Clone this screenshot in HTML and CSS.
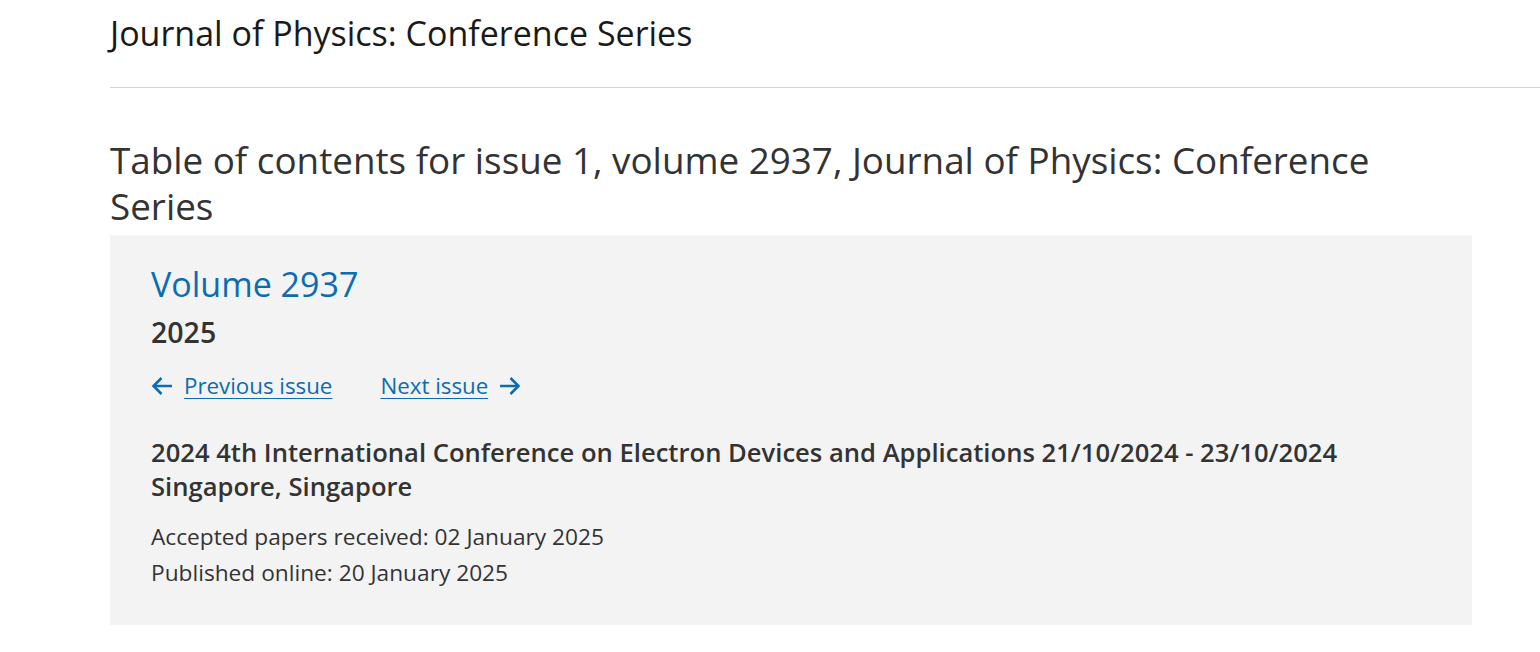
FILE: index.html
```html
<!DOCTYPE html>
<html lang="en">
<head>
<meta charset="utf-8">
<title>Journal of Physics: Conference Series</title>
<link rel="stylesheet" href="styles.css">
</head>
<body>
<header class="site-header">
  <div class="site-title">Journal of Physics: Conference Series</div>
</header>
<main class="content">
  <h1 class="toc-heading">Table of contents for issue 1, volume 2937, Journal of Physics: Conference Series</h1>
  <section class="issue-box">
    <h2 class="volume">Volume 2937</h2>
    <div class="year">2025</div>
    <nav class="issue-nav">
      <a class="nav-link prev" href="#">
        <svg class="arrow" width="21" height="20" viewBox="0 0 21 20" aria-hidden="true"><path d="M21 10H2.5M10.5 2L2.5 10L10.5 18" fill="none" stroke="#0a6db3" stroke-width="2.6" stroke-linecap="butt" stroke-linejoin="miter"/></svg>
        <span class="link-text">Previous issue</span>
      </a>
      <a class="nav-link next" href="#">
        <span class="link-text">Next issue</span>
        <svg class="arrow" width="21" height="20" viewBox="0 0 21 20" aria-hidden="true"><path d="M0 10H18.5M10.5 2L18.5 10L10.5 18" fill="none" stroke="#0a6db3" stroke-width="2.6" stroke-linecap="butt" stroke-linejoin="miter"/></svg>
      </a>
    </nav>
    <h3 class="conference">2024 4th International Conference on Electron Devices and Applications 21/10/2024 - 23/10/2024 Singapore, Singapore</h3>
    <p class="meta">Accepted papers received: 02 January 2025</p>
    <p class="meta">Published online: 20 January 2025</p>
  </section>
</main>
</body>
</html>
```

FILE: styles.css
```css
html, body {
  margin: 0;
  padding: 0;
  background: #ffffff;
}
body {
  font-family: "Open Sans", "Noto Sans", "Liberation Sans", sans-serif;
  color: #333333;
}
.site-header {
  margin-left: 110px;
  height: 88px;
  border-bottom: 1px solid #d4d4d4;
  box-sizing: border-box;
}
.site-title {
  font-size: 34px;
  line-height: 44px;
  padding-top: 11px;
  color: #1a1a1a;
}
.content {
  margin-left: 110px;
  width: 1362px;
  padding-top: 49px;
}
.toc-heading {
  margin: 0;
  font-size: 36.8px;
  font-weight: 400;
  line-height: 46px;
  color: #333333;
  max-width: 1320px;
}
.issue-box {
  margin-top: 6px;
  background: #f3f3f3;
  padding: 26px 41px 34px;
  box-sizing: border-box;
}
.volume {
  margin: 0;
  font-size: 34px;
  font-weight: 400;
  line-height: 46px;
  color: #0a6db3;
}
.year {
  margin-top: 7px;
  font-size: 28.5px;
  font-weight: 600;
  line-height: 36px;
  color: #333333;
}
.issue-nav {
  display: flex;
  gap: 48px;
  margin-top: 21px;
  align-items: center;
}
.nav-link {
  display: flex;
  align-items: center;
  gap: 12px;
  color: #0a6db3;
  font-size: 22.3px;
  line-height: 30px;
  text-decoration: none;
}
.link-text {
  text-decoration: underline;
  text-underline-offset: 4px;
  text-decoration-thickness: 1px;
}
.arrow {
  display: block;
}
.conference {
  margin: 35px 0 0;
  font-size: 25.6px;
  font-weight: 600;
  line-height: 34px;
  color: #333333;
  max-width: 1260px;
}
.meta {
  margin: 0;
  font-size: 22.7px;
  line-height: 36px;
  color: #333333;
}
.conference + .meta {
  margin-top: 15px;
}
```
